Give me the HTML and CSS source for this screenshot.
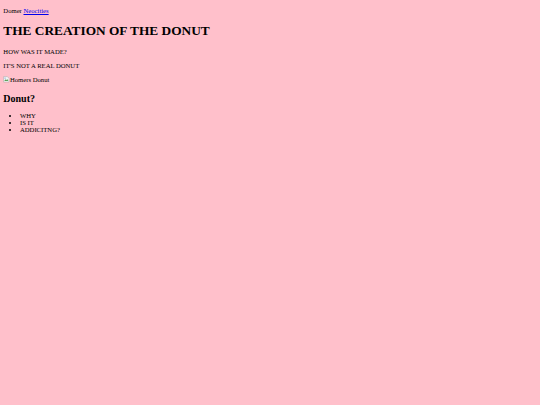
FILE: index.html
```html
<!DOCTYPE html>
<html class="scaled">
<head>
<meta charset="utf-8">
<title>THE CREATION OF THE DONUT</title>
<link rel="stylesheet" href="styles.css">
</head>
<body class="page">
<p class="text top">Domer <a class="link" href="#">Neocities</a></p>
<h1 class="title">THE CREATION OF THE DONUT</h1>
<p class="text">HOW WAS IT MADE?</p>
<p class="text">IT'S NOT A REAL DONUT</p>
<p class="text"><span class="broken"><svg class="broken-icon" viewBox="0 0 16 16" width="16" height="16"><path d="M1.5 1.5h9l4 4v9h-13z" fill="#f4f4f4" stroke="#9a9a9a"/><path d="M3 12l3-4 2 2 2-3 3 5z" fill="#5aa05a"/><circle cx="5" cy="5" r="1.5" fill="#6a9ad8"/></svg>Homers Donut</span></p>
<h2 class="subtitle">Donut?</h2>
<ul class="list">
<li>WHY</li>
<li>IS IT</li>
<li>ADDICITNG?</li>
</ul>
</body>
</html>
```
FILE: styles.css
```css
.scaled {
  zoom: 0.416667;
  background: #ffc0cb;
}
.page {
  margin: 8px;
  font-family: "Liberation Serif", "Times New Roman", serif;
  font-size: 16px;
  color: #000;
  background: #ffc0cb;
}
.text {
  margin: 1em 0;
}
.top {
  margin-top: 10px;
}
.link {
  color: #0000ee;
  text-decoration: underline;
}
.title {
  font-size: 2em;
  font-weight: bold;
  margin: 0.67em 0;
}
.subtitle {
  font-size: 1.5em;
  font-weight: bold;
  margin: 24px 0 0.83em;
}
.list {
  margin: 1em 0;
  padding-left: 40px;
  list-style: disc;
}
.broken-icon {
  vertical-align: -3px;
}
```
